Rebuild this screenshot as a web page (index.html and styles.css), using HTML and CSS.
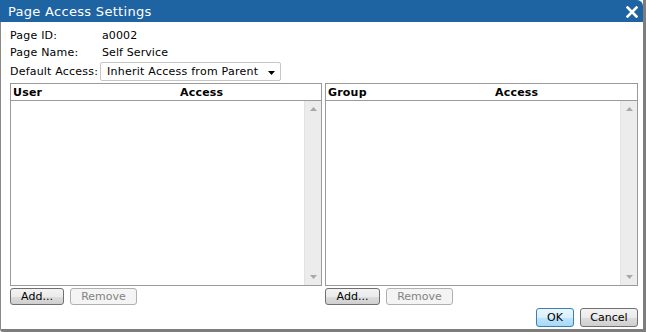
FILE: index.html
```html
<!DOCTYPE html>
<html lang="en">
<head>
  <meta charset="UTF-8">
  <title>Page Access Settings</title>
  <link rel="stylesheet" href="styles.css">
</head>
<body>
  <div class="dialog">
    <div class="titlebar">
      <span class="title">Page Access Settings</span>
      <svg class="close" width="12" height="12" viewBox="0 0 12 12">
        <path d="M1.5 1.5 L10.5 10.5 M10.5 1.5 L1.5 10.5" stroke="#fff" stroke-width="2.6" stroke-linecap="square"/>
      </svg>
    </div>

    <div class="content">
      <div class="field">
        <span class="label">Page ID:</span>
        <span class="value">a0002</span>
      </div>
      <div class="field">
        <span class="label">Page Name:</span>
        <span class="value">Self Service</span>
      </div>
      <div class="field select-row">
        <span class="label">Default Access:</span>
        <div class="select">
          <span>Inherit Access from Parent</span>
          <svg width="7" height="4" viewBox="0 0 7 4"><path d="M0 0 H7 L3.5 4 Z" fill="#000"/></svg>
        </div>
      </div>

      <div class="lists">
        <div class="list-col">
          <div class="panel">
            <div class="panel-head">
              <span class="col-name">User</span>
              <span>Access</span>
            </div>
            <div class="panel-body">
              <div class="rows"></div>
              <div class="scrollbar">
                <svg width="7" height="4" viewBox="0 0 7 4"><path d="M0 4 H7 L3.5 0 Z" fill="#a8a8a8"/></svg>
                <svg width="7" height="4" viewBox="0 0 7 4"><path d="M0 0 H7 L3.5 4 Z" fill="#a8a8a8"/></svg>
              </div>
            </div>
          </div>
          <div class="buttons">
            <button class="btn btn-add">Add...</button>
            <button class="btn btn-remove" disabled>Remove</button>
          </div>
        </div>

        <div class="list-col">
          <div class="panel">
            <div class="panel-head">
              <span class="col-name">Group</span>
              <span>Access</span>
            </div>
            <div class="panel-body">
              <div class="rows"></div>
              <div class="scrollbar">
                <svg width="7" height="4" viewBox="0 0 7 4"><path d="M0 4 H7 L3.5 0 Z" fill="#a8a8a8"/></svg>
                <svg width="7" height="4" viewBox="0 0 7 4"><path d="M0 0 H7 L3.5 4 Z" fill="#a8a8a8"/></svg>
              </div>
            </div>
          </div>
          <div class="buttons">
            <button class="btn btn-add">Add...</button>
            <button class="btn btn-remove" disabled>Remove</button>
          </div>
        </div>
      </div>

      <div class="footer">
        <button class="btn btn-ok">OK</button>
        <button class="btn btn-cancel">Cancel</button>
      </div>
    </div>
  </div>
</body>
</html>
```

FILE: styles.css
```css
* {
  margin: 0;
  padding: 0;
  box-sizing: border-box;
}
body {
  width: 646px;
  height: 332px;
  font-family: "DejaVu Sans", Verdana, sans-serif;
  font-size: 11px;
  color: #000;
  background: #fff;
}
.dialog {
  width: 646px;
  height: 332px;
  display: flex;
  flex-direction: column;
  background: #fff;
  border-left: 1px solid #8a8a8a;
  border-right: 3px solid #7d7d7d;
  border-bottom: 3px solid #7d7d7d;
  border-bottom-left-radius: 3px;
}
.titlebar {
  height: 22px;
  margin-left: -1px;
  padding: 0 5px 0 8px;
  display: flex;
  align-items: center;
  justify-content: space-between;
  background: #1f64a2;
  border-top-right-radius: 6px;
  color: #fff;
}
.title {
  font-size: 13px;
  letter-spacing: 0.3px;
}
.close {
  display: block;
  margin-top: 1px;
}
.content {
  flex: 1;
  padding: 5px 5px 0 9px;
  display: flex;
  flex-direction: column;
}
.field {
  display: flex;
  align-items: center;
  height: 16px;
}
.field:nth-child(2) {
  margin-top: 1px;
}
.label {
  width: 92px;
  letter-spacing: 0.2px;
}
.value {
  letter-spacing: 0.1px;
}
.select-row {
  height: 19px;
  margin-top: 2px;
}
.select-row .label {
  width: 90px;
}
.select {
  width: 181px;
  height: 19px;
  border: 1px solid #c6c6c6;
  border-radius: 2px;
  padding: 0 5px 0 6px;
  display: flex;
  align-items: center;
  justify-content: space-between;
  letter-spacing: 0.25px;
}
.select svg {
  margin-top: 2px;
}
.lists {
  margin-top: 2px;
  display: flex;
  gap: 3px;
}
.list-col {
  display: flex;
  flex-direction: column;
}
.list-col:first-child {
  width: 312px;
}
.list-col:last-child {
  width: 313px;
}
.panel {
  height: 203px;
  border: 1px solid #9a9a9a;
  display: flex;
  flex-direction: column;
}
.panel-head {
  height: 17px;
  border-bottom: 1px solid #9a9a9a;
  padding-left: 2px;
  display: flex;
  align-items: center;
  font-weight: bold;
  letter-spacing: 0.2px;
}
.col-name {
  width: 167px;
}
.panel-body {
  flex: 1;
  display: flex;
}
.rows {
  flex: 1;
}
.scrollbar {
  width: 17px;
  background: #ececec;
  border-left: 1px solid #e2e2e2;
  display: flex;
  flex-direction: column;
  justify-content: space-between;
  align-items: center;
  padding: 6px 0 6px;
}
.buttons {
  margin-top: 2px;
  display: flex;
  gap: 6px;
}
.btn {
  font-family: "DejaVu Sans", Verdana, sans-serif;
  font-size: 11px;
  height: 17px;
  border: 1px solid #707070;
  border-radius: 3px;
  background: linear-gradient(#f3f3f3, #ebebeb 50%, #dddddd 51%, #cfcfcf);
  color: #000;
  line-height: 14px;
}
.btn-add {
  width: 54px;
}
.list-col:last-child .btn-add {
  width: 55px;
}
.btn-remove {
  width: 67px;
  border-color: #b0b0b0;
  background: #f4f4f4;
  color: #838383;
}
.footer {
  margin-top: 3px;
  display: flex;
  justify-content: flex-end;
  gap: 6px;
}
.footer .btn {
  height: 19px;
}
.btn-ok {
  width: 38px;
  border-color: #3c7fb1;
  background: linear-gradient(#eaf6fd, #d9f0fc 50%, #bee6fd 51%, #a7d9f5);
}
.btn-cancel {
  width: 58px;
}
```
